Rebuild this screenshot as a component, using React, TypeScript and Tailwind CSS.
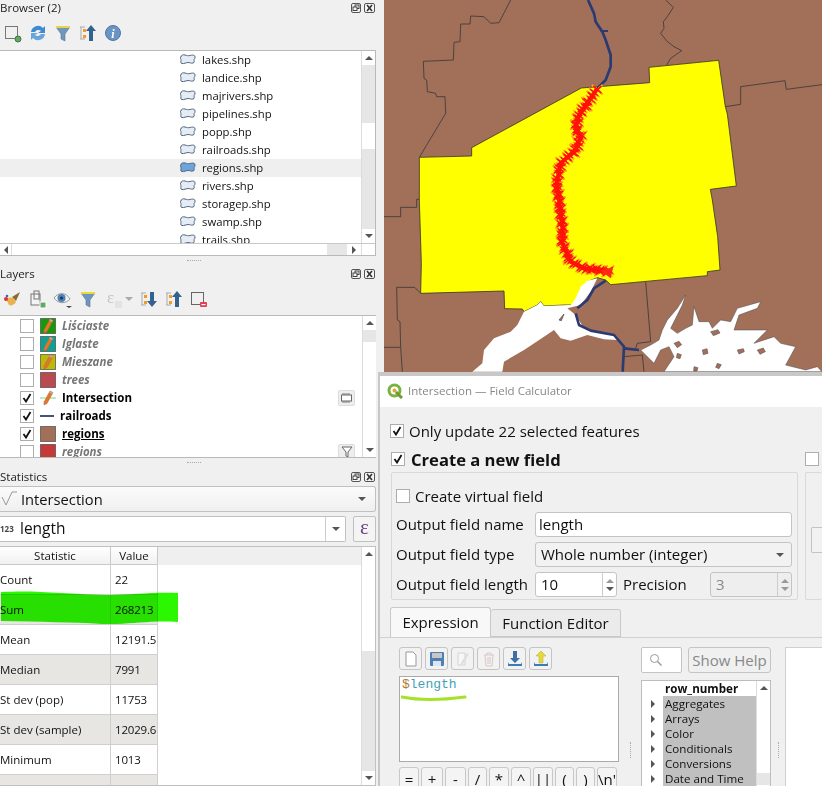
import React from "react";

const ui = { fontFamily: '"Open Sans", "Noto Sans", sans-serif' };

// ---------- small icons ----------
const Ico = ({ children, w = 20, h = 20 }: { children: React.ReactNode; w?: number; h?: number }) => (
  <svg width={w} height={h} viewBox={`0 0 ${w} ${h}`} className="shrink-0">
    {children}
  </svg>
);

const ShpIcon = ({ active }: { active?: boolean }) => (
  <svg width="16" height="12" viewBox="0 0 16 12" className="shrink-0">
    <path
      d="M1 3C1 1 3 .5 5 1s3 1 5 .5 5-1 5 1.500-1 2-1 3 1 2.500-1 3-3-.5-5-.5-4 1.500-6 1-1-2-1-3 0-1.500-1-3Z"
      fill={active ? "#6ea4dc" : "#e4ecf6"}
      stroke="#55657a"
      strokeWidth="1"
    />
  </svg>
);

const DockButtons = () => (
  <div className="flex gap-[3px] mr-[9px]">
    <svg width="10" height="10" viewBox="0 0 10 10">
      <rect x=".5" y=".5" width="9" height="9" rx="1.500" fill="#f5f5f5" stroke="#555" />
      <rect x="4" y="2" width="4" height="3.500" fill="none" stroke="#444" />
      <rect x="2" y="4" width="4" height="3.500" fill="#f5f5f5" stroke="#444" />
    </svg>
    <svg width="11" height="10" viewBox="0 0 11 10">
      <rect x=".5" y=".5" width="10" height="9" rx="1.500" fill="#f5f5f5" stroke="#555" />
      <path d="M3 2l5 6M8 2l-5 6" stroke="#333" strokeWidth="1.600" />
    </svg>
  </div>
);

const Funnel = ({ top = "#e8d44a" }: { top?: string }) => (
  <Ico>
    <path d="M3 4h14l-5 7v7l-4-2v-5Z" fill="#6f96bd" stroke="#5a7a9c" strokeWidth=".6" />
    <rect x="3" y="3" width="14" height="2" fill={top} />
  </Ico>
);

const ArrowTree = ({ down, color = "#34628f" }: { down?: boolean; color?: string }) => (
  <Ico>
    <path d="M2 4h5M3 4v12M2 16h5" stroke="#aaa" fill="none" />
    <rect x="5" y="6" width="3" height="3" fill="#f39a2c" />
    <rect x="5" y="12" width="3" height="3" fill="#f39a2c" />
    <path d={down ? "M11 3h4v9h3l-5 6-5-6h3Z" : "M13 2l5 6h-3v10h-4V8H8Z"} fill={color} />
  </Ico>
);

const RemoveBox = () => (
  <Ico>
    <rect x="2.500" y="3.500" width="12" height="12" fill="none" stroke="#666" />
    <rect x="11" y="13" width="7" height="5" rx="1" fill="#e2404c" />
    <rect x="12.500" y="15" width="4" height="1.200" fill="#fff" />
  </Ico>
);

const Brush = () => (
  <Ico>
    <path d="M9 8l8-5-4 9Z" fill="#8c6a2f" />
    <path d="M3 10c3-2 6-2 8 0l2 3c-2 3-5 4-7 3-1-2-2-4-3-6Z" fill="#e9b24a" />
    <circle cx="3" cy="10" r="2" fill="#d33" />
    <circle cx="4" cy="7" r="1.300" fill="#36c" />
  </Ico>
);

const Pencil = () => (
  <>
    <path d="M10 1l3 1.500-6 11-3 1.500v-3Z" fill="#e5752a" stroke="#b5643a" strokeWidth=".5" />
    <path d="M10 1l3 1.500-.8 1.500-3-1.500Z" fill="#b9b0a8" />
  </>
);

const Swatch = ({ bg, pencil }: { bg: string; pencil?: boolean }) => (
  <svg width="16" height="16" viewBox="0 0 16 16" className="shrink-0">
    <rect x=".5" y=".5" width="15" height="15" fill={bg} stroke="#4a4a4a" strokeOpacity=".7" />
    {pencil && <Pencil />}
  </svg>
);

const Check = ({ checked, className = "" }: { checked?: boolean; className?: string }) => (
  <span className={`w-[14px] h-[14px] shrink-0 border border-[#adadad] bg-white flex items-center justify-center ${className}`}>
    {checked && (
      <svg width="10" height="10" viewBox="0 0 10 10">
        <path d="M1.500 5l2.500 3.500L8.500 1" fill="none" stroke="#111" strokeWidth="1.800" />
      </svg>
    )}
  </span>
);

const Caret = ({ className = "" }: { className?: string }) => (
  <span className={`w-0 h-0 border-x-[4px] border-x-transparent border-t-[4px] border-t-[#555] ${className}`} />
);

// ---------- scrollbars ----------
const VScroll = ({ before, thumb }: { before: number; thumb: number }) => (
  <div className="w-[14px] shrink-0 flex flex-col bg-[#e6e6e6] border-l border-[#dcdcdc]">
    <div className="h-[14px] shrink-0 bg-white flex items-center justify-center">
      <span className="w-0 h-0 border-x-[4px] border-x-transparent border-b-[4px] border-b-[#555]" />
    </div>
    <div className="shrink-0" style={{ height: before }} />
    <div className="shrink-0 bg-white" style={{ height: thumb }} />
    <div className="flex-1" />
    <div className="h-[14px] shrink-0 bg-white flex items-center justify-center">
      <Caret />
    </div>
  </div>
);

const Handle = () => (
  <div className="h-[9px] flex justify-center items-center pl-[4px]">
    <div className="w-[14px] border-t border-dotted border-[#aaa]" />
  </div>
);

const DockTitle = ({ title, h }: { title: string; h: number }) => (
  <div className="flex items-center justify-between text-[11.5px] text-[#222]" style={{ height: h }}>
    <span>{title}</span>
    <DockButtons />
  </div>
);

// ---------- data ----------
const files = ["lakes", "landice", "majrivers", "pipelines", "popp", "railroads", "regions", "rivers", "storagep", "swamp", "trails"];

const stats = [
  ["Count", "22"],
  ["Sum", "268213"],
  ["Mean", "12191.5"],
  ["Median", "7991"],
  ["St dev (pop)", "11753"],
  ["St dev (sample)", "12029.6"],
  ["Minimum", "1013"],
  ["", ""],
];

const groups = ["Aggregates", "Arrays", "Color", "Conditionals", "Conversions", "Date and Time"];
const operators: [string, number][] = [
  ["=", 20], ["+", 22], ["-", 21], ["/", 19], ["*", 20], ["^", 20], ["||", 20], ["(", 19], [")", 19], ["\\n'", 20],
];

// ---------- map ----------
const redLine = [
  [640, 265], [610, 310], [585, 345], [575, 385], [590, 410], [575, 450], [530, 490], [518, 550],
  [525, 600], [535, 680], [535, 730], [560, 785], [600, 805], [680, 815],
];

function markers() {
  const pts: number[][] = [];
  for (let i = 0; i < redLine.length - 1; i++) {
    const [x1, y1] = redLine[i];
    const [x2, y2] = redLine[i + 1];
    const n = Math.ceil(Math.hypot(x2 - x1, y2 - y1) / 8);
    for (let k = 0; k < n; k++) {
      const j = pts.length;
      pts.push([
        x1 + ((x2 - x1) * k) / n + Math.sin(j * 1.7) * 4,
        y1 + ((y2 - y1) * k) / n + Math.cos(j * 2.3) * 4,
      ]);
    }
  }
  return pts;
}

const marks = markers();

const MapView = () => (
  <svg viewBox="0 0 1314 1125" className="w-full h-full block bg-[#a26f59]">
    <g fill="none" stroke="#3a3a3a" strokeWidth="2.500">
      <polyline points="380,0 345,68 320,70 300,50 260,48 258,72 230,72 228,125 210,127 208,180 118,184 120,235 128,240 130,275 155,280 158,290 183,290 185,340 106,472" />
      <polyline points="0,650 50,650 50,622 98,622 98,598 106,598" />
      <polyline points="110,880 92,862 38,862 40,960 48,965 50,1042 0,1042" />
      <polyline points="50,1042 55,1115" />
      <polyline points="785,845 800,1025 760,1030 755,1045" />
      <polyline points="720,1070 775,1065 780,1115" />
      <polyline points="845,0 868,22 850,50 838,65 840,85 830,100 850,125 870,140 893,152 860,175 848,195" />
      <polyline points="1024,320 1070,313 1070,260 1203,242 1207,268 1314,254" />
    </g>
    <polygon
      points="106,472 263,468 263,443 592,264 797,248 795,202 1004,181 1024,320 1030,342 1057,558 979,568 985,600 1001,710 1008,810 970,815 970,827 680,854 665,840 640,833 610,845 590,865 570,915 540,915 480,918 470,905 460,915 420,935 415,927 362,926 360,873 110,880 112,790 106,600"
      fill="#ffff00"
      stroke="#3a3a20"
      strokeWidth="2.500"
    />
    <path
      d="M640 835 610 842 590 860 572 900 560 915 480 918 470 905 460 915 420 935 400 975 380 995 330 1015 300 1050 295 1090 265 1115H355L360 1085 420 1050 480 1010 510 990 530 1015 560 1022 610 1005 660 1018 700 1020 720 1040 715 1030 690 1005 640 995 600 985 575 945 550 925 590 915 620 875Z"
      fill="#fff"
    />
    <path d="M525 960 540 942 532 962Z" fill="#a26f59" stroke="#444" strokeWidth="2" />
    <path
      d="M770 1050 800 1035 825 1020 835 990 850 960 880 925 905 885 895 915 880 945 860 985 880 1000 905 985 925 975 930 920 945 965 975 965 985 985 1010 960 1040 965 1060 925 1130 905 1120 925 1065 945 1050 990 1075 990 1150 990 1110 1030 1170 1010 1190 1030 1235 1040 1205 1095 1265 1110 1300 1100 1314 1115H840L870 1070 855 1040 830 1050 810 1090 785 1065Z"
      fill="#fff"
      stroke="#4a4a4a"
      strokeWidth="1.500"
    />
    <g fill="#a26f59" stroke="#444" strokeWidth="1.500">
      <path d="M870 1030l15-6 8 10-13 9Z" />
      <path d="M955 1050l14-4 3 14-14 4Z" />
      <path d="M1060 1050l18-4 3 9-16 7Z" />
      <path d="M880 1060l12 4-4 12-11-3Z" />
      <path d="M1000 1090l12 4-7 12-10-4Z" />
      <path d="M930 1100l12 3-3 10h-10Z" />
      <path d="M1120 1050l18-6 6 11-16 8Z" />
      <path d="M980 995l22-6 6 10-20 8Z" />
    </g>
    <g fill="none" stroke="#2c3a72" strokeWidth="8" strokeLinejoin="round">
      <polyline points="612,0 630,40 635,65 655,95 665,120 680,165 680,200 665,240 640,265" />
      <polyline points="650,93 672,93" strokeWidth="6" />
      <polyline points="665,842 630,865 610,900 580,925" />
      <polyline points="575,940 585,975 620,992 690,1005 720,1040 716,1115" />
      <polyline points="720,1045 765,1050" />
    </g>
    <g stroke="#ff9d1e" strokeWidth="5">
      {marks.map(([x, y], i) => (
        <path key={i} d={`M${x - 16} ${y - 14}L${x + 16} ${y + 14}M${x + 16} ${y - 14}L${x - 16} ${y + 14}`} />
      ))}
    </g>
    <g stroke="#ff1008" strokeWidth="4">
      {marks.map(([x, y], i) => (
        <path key={i} d={`M${x - 12} ${y - 10}L${x + 12} ${y + 10}M${x + 12} ${y - 10}L${x - 12} ${y + 10}`} />
      ))}
    </g>
    <polyline points={redLine.map((p) => p.join(",")).join(" ")} fill="none" stroke="#ff1008" strokeWidth="12" />
    <path d="M688 800 650 812 680 835Z" fill="#ff2a10" />
  </svg>
);

// ---------- left docks ----------
const BrowserDock = () => (
  <div className="flex flex-col">
    <DockTitle title="Browser (2)" h={16} />
    <div className="h-[34px] flex items-center gap-[5px] pl-[3px]">
      <Ico>
        <rect x="2.500" y="3.500" width="12" height="12" fill="none" stroke="#777" />
        <circle cx="15" cy="16" r="3" fill="#6ba26a" stroke="#3e7a3e" />
      </Ico>
      <Ico>
        <path d="M3 9a7 7 0 0 1 12-4l2-2v7h-7l3-2a4 4 0 0 0-6 1Z" fill="#3f8bd0" />
        <path d="M17 11a7 7 0 0 1-12 4l-2 2v-7h7l-3 2a4 4 0 0 0 6-1Z" fill="#67a5dd" />
      </Ico>
      <Funnel />
      <ArrowTree />
      <Ico>
        <circle cx="10" cy="10" r="7.500" fill="#6a94c4" stroke="#4d78a8" />
        <text x="10" y="14.500" textAnchor="middle" fontSize="12" fontWeight="700" fontStyle="italic" fill="#fff" fontFamily="Liberation Serif">i</text>
      </Ico>
    </div>
    <div className="h-[206px] mr-[8px] border border-l-0 border-[#b9b9b9] bg-white flex flex-col">
      <div className="flex h-[192px]">
        <div className="flex-1 overflow-hidden">
          {files.map((f) => (
            <div key={f} className={`h-[18px] flex items-center pl-[180px] gap-[6px] text-[11.3px] text-[#111] ${f === "regions" ? "bg-[#efefef]" : ""}`}>
              <ShpIcon active={f === "regions"} />
              <span>{f}.shp</span>
            </div>
          ))}
        </div>
        <VScroll before={58} thumb={26} />
      </div>
      <div className="h-[12px] flex border-t border-[#c8c8c8]">
        <div className="w-[11px] flex items-center justify-center">
          <span className="w-0 h-0 border-y-[4px] border-y-transparent border-r-[4px] border-r-[#555]" />
        </div>
        <div className="flex-1 bg-white border-l border-[#ddd]" />
        <div className="w-[20px] bg-[#e6e6e6]" />
        <div className="w-[14px] flex items-center justify-center">
          <span className="w-0 h-0 border-y-[4px] border-y-transparent border-l-[4px] border-l-[#555]" />
        </div>
        <div className="w-[14px] border-l border-[#ddd]" />
      </div>
    </div>
    <Handle />
  </div>
);

type Layer = { name: string; on?: boolean; swatch: React.ReactNode; cls: string; badge?: React.ReactNode };

const off = "italic font-bold text-[#777]";

const layers: Layer[] = [
  { name: "Liściaste", swatch: <Swatch bg="#159a0c" pencil />, cls: off },
  { name: "Iglaste", swatch: <Swatch bg="#0ca197" pencil />, cls: off },
  { name: "Mieszane", swatch: <Swatch bg="#bcb908" pencil />, cls: off },
  { name: "trees", swatch: <Swatch bg="#b84a50" />, cls: off },
  {
    name: "Intersection",
    on: true,
    cls: "font-bold text-black",
    swatch: (
      <svg width="16" height="16" viewBox="0 0 16 16" className="shrink-0">
        <path d="M0 8h16" stroke="#9fe8a8" strokeWidth="1.500" />
        <Pencil />
      </svg>
    ),
    badge: (
      <span className="absolute right-[7px] top-px w-[17px] h-[16px] rounded-[2px] bg-[#eee] border border-[#ddd] flex items-center justify-center">
        <svg width="13" height="10" viewBox="0 0 13 10">
          <rect x="1.500" y="2" width="10" height="6" fill="#fff" stroke="#666" />
          <path d="M3 0v2M5 0v2M7 0v2M9 0v2M3 8v2M5 8v2M7 8v2M9 8v2" stroke="#777" />
        </svg>
      </span>
    ),
  },
  {
    name: "railroads",
    on: true,
    cls: "font-bold text-black -ml-[2px]",
    swatch: (
      <svg width="16" height="16" viewBox="0 0 16 16" className="shrink-0">
        <path d="M0 8h14" stroke="#465082" strokeWidth="2" />
      </svg>
    ),
  },
  { name: "regions", on: true, swatch: <Swatch bg="#a26f59" />, cls: "font-bold text-black underline" },
  {
    name: "regions",
    swatch: <Swatch bg="#c43a3a" />,
    cls: off,
    badge: (
      <span className="absolute right-[7px] top-px w-[17px] h-[16px] rounded-[2px] bg-[#eee] border border-[#ddd] flex items-center justify-center">
        <svg width="12" height="12" viewBox="0 0 12 12">
          <path d="M1 1h10L7 6v5L5 10V6Z" fill="#fff" stroke="#666" />
        </svg>
      </span>
    ),
  },
];

const LayersDock = () => (
  <div className="flex flex-col">
    <DockTitle title="Layers" h={18} />
    <div className="h-[32px] flex items-center gap-[5px] pl-[3px]">
      <Brush />
      <Ico>
        <rect x="3" y="5" width="9" height="11" fill="#f3f3f3" stroke="#777" />
        <rect x="6" y="2" width="5" height="8" fill="none" stroke="#777" />
        <rect x="12" y="13" width="6" height="6" fill="#63a963" stroke="#fff" />
      </Ico>
      <Ico>
        <path d="M1 9c4-6 12-6 16 1-4 5-12 5-16-1Z" fill="#f2f2f2" stroke="#9a9a9a" />
        <circle cx="8.500" cy="9" r="4" fill="#4d82b8" />
        <circle cx="8.500" cy="9" r="1.500" fill="#1d3552" />
        <path d="M13 17h6l-3 2Z" fill="#444" />
      </Ico>
      <Funnel top="#ecd93a" />
      <div className="flex items-center gap-[3px] ml-[3px] mr-[1px]">
        <Ico w={16} h={20}>
          <text x="1" y="14" fontSize="17" fill="#c4c4c4" fontFamily="Liberation Serif">ε</text>
          <rect x="9" y="12" width="7" height="7" fill="#e3e3e3" />
        </Ico>
        <Caret className="border-t-[#aaa]" />
      </div>
      <ArrowTree down />
      <ArrowTree />
      <RemoveBox />
    </div>
    <div className="h-[143px] mr-[8px] border-y border-[#b9b9b9] bg-white flex overflow-hidden">
      <div className="flex-1 overflow-hidden pt-px">
        {layers.map((l, i) => (
          <div key={i} className="relative h-[18px] flex items-center pl-[20px] text-[11.5px]">
            <Check checked={l.on} className="w-[14px]" />
            <span className="ml-[6px] mr-[6px] flex">{l.swatch}</span>
            <span className={l.cls}>{l.name}</span>
            {l.badge}
          </div>
        ))}
      </div>
      <div className="flex [&>div>div:nth-child(2)]:bg-[#e6e6e6] [&>div]:bg-white">
        <VScroll before={12} thumb={0} />
      </div>
    </div>
    <Handle />
  </div>
);

const StatisticsDock = () => (
  <div className="relative flex flex-col">
    <DockTitle title="Statistics" h={19} />
    <div className="h-[26px] mr-[8px] border border-l-0 border-[#c0c0c0] rounded-r-[3px] bg-gradient-to-b from-[#fbfbfb] to-[#efefef] flex items-center pr-[9px] text-[14.7px] text-[#111]">
      <svg width="18" height="16" viewBox="0 0 18 16" className="ml-px mr-[2px] shrink-0">
        <path d="M1 6l4 8 6-13 5 0" fill="none" stroke="#999" />
      </svg>
      <span className="flex-1">Intersection</span>
      <Caret />
    </div>
    <div className="mt-[4px] h-[26px] mr-[8px] flex">
      <div className="w-[346px] border border-l-0 border-[#c0c0c0] rounded-r-[2px] bg-white flex items-center text-[15.5px] text-[#111]">
        <span className="w-[20px] text-[8px] font-bold text-[#444]">123</span>
        <span className="flex-1">length</span>
        <span className="w-[20px] self-stretch border-l border-[#ccc] flex items-center justify-center">
          <Caret />
        </span>
      </div>
      <div className="ml-[7px] flex-1 border border-[#c0c0c0] rounded-[2px] bg-[#f4f4f4] flex items-center justify-center text-[21px] leading-none pb-[3px] text-[#6a3d86]" style={{ fontFamily: "Liberation Serif" }}>
        ε
      </div>
    </div>
    <div className="mt-[4px] mr-[8px] h-[240px] border border-l-0 border-[#c0c0c0] bg-white flex overflow-hidden">
      <div className="flex-1 overflow-hidden text-[11.5px] text-[#111]">
        <div className="h-[18px] bg-[#efefef] flex leading-[17px]">
          <div className="w-[111px] text-center bg-gradient-to-b from-white to-[#f1f1f1] border-r border-b border-[#c9c9c9]">Statistic</div>
          <div className="w-[47px] text-center bg-gradient-to-b from-white to-[#f1f1f1] border-r border-b border-[#c9c9c9]">Value</div>
        </div>
        {stats.map(([name, value], i) => (
          <div key={i} className={`h-[30px] w-[158px] flex items-center border-b border-r border-[#cfcfcf] ${i % 2 === 1 ? "bg-[#e8e6e3]" : "bg-white"}`}>
            <div className="w-[111px] h-full flex items-center border-r border-[#cfcfcf]">{name}</div>
            <div className="pl-[4px] tracking-[-0.2px]">{value}</div>
          </div>
        ))}
      </div>
      <VScroll before={0} thumb={90} />
    </div>
    {/* green marker stroke over the Sum row */}
    <svg width="180" height="34" viewBox="0 0 180 34" className="absolute left-0 top-[123px] mix-blend-multiply">
      <path d="M1 2C40 0 60 4 111 5c20 0 40-3 67-2v29c-30-2-50 3-76 2-30-2-60-2-101-3Z" fill="#2bf800" />
    </svg>
  </div>
);

// ---------- dialog ----------
const Spin = ({ value, disabled, className = "" }: { value: string; disabled?: boolean; className?: string }) => (
  <div className={`h-[25px] border border-[#c4c4c4] rounded-[3px] flex items-center pl-[5px] ${disabled ? "bg-[#eeeeee] text-[#888]" : "bg-white"} ${className}`}>
    <span className="flex-1">{value}</span>
    <span className="w-[14px] self-stretch border-l border-[#ccc] flex flex-col items-center justify-center gap-[4px]">
      <span className="w-0 h-0 border-x-[4px] border-x-transparent border-b-[4px] border-b-[#999]" />
      <Caret className={disabled ? "border-t-[#999]" : ""} />
    </span>
  </div>
);

const FormRow = ({ label, children, className = "" }: { label: string; children: React.ReactNode; className?: string }) => (
  <div className={`flex items-center ${className}`}>
    <span className="w-[139px] shrink-0">{label}</span>
    {children}
  </div>
);

const ToolBtn = ({ children }: { children: React.ReactNode }) => (
  <span className="w-[23px] h-[23px] rounded-[3px] border border-[#c4c4c4] bg-[#f2f2f2] flex items-center justify-center">
    {children}
  </span>
);

const ExpressionTools = () => (
  <div className="flex gap-[3px]">
    <ToolBtn>
      <svg width="14" height="16" viewBox="0 0 14 16"><path d="M2 1h7l3 3v11H2Z" fill="#fff" stroke="#999" /></svg>
    </ToolBtn>
    <ToolBtn>
      <svg width="16" height="16" viewBox="0 0 16 16">
        <rect x="1" y="1" width="14" height="14" rx="1" fill="#4f7fb3" />
        <rect x="3" y="2" width="10" height="5" fill="#c7c7c7" />
        <rect x="4" y="10" width="8" height="5" fill="#dbe6f2" />
      </svg>
    </ToolBtn>
    <ToolBtn>
      <svg width="16" height="16" viewBox="0 0 16 16">
        <path d="M3 2h7v12H3Z" fill="#f6f6f6" stroke="#d4d4d4" />
        <path d="M12 2l2 1-6 10-2 1v-2Z" fill="#dedede" />
      </svg>
    </ToolBtn>
    <ToolBtn>
      <svg width="14" height="16" viewBox="0 0 14 16">
        <path d="M2 4h10M5 4V2h4v2M3 4l1 11h6l1-11M6 6v7M8 6v7" fill="none" stroke="#d8c8c8" />
      </svg>
    </ToolBtn>
    <ToolBtn>
      <svg width="18" height="18" viewBox="0 0 18 18">
        <path d="M7 1h4v7h3l-5 5-5-5h3Z" fill="#3d6ea5" />
        <path d="M2 12v4h14v-4l-1 2H3Z" fill="#3d7cb8" />
      </svg>
    </ToolBtn>
    <ToolBtn>
      <svg width="18" height="18" viewBox="0 0 18 18">
        <path d="M9 1l5 5h-3v7H7V6H4Z" fill="#e6d93a" stroke="#b9aa2a" strokeWidth=".5" />
        <path d="M2 12v4h14v-4l-1 2H3Z" fill="#3d7cb8" />
      </svg>
    </ToolBtn>
  </div>
);

const QLogo = () => (
  <svg width="16" height="16" viewBox="0 0 16 16" className="shrink-0">
    <circle cx="7.500" cy="7.500" r="5.500" fill="#fff" stroke="#7bb13e" strokeWidth="3" />
    <circle cx="7.500" cy="7.500" r="2" fill="#f0a030" />
    <path d="M9 9l6 6" stroke="#6a9c32" strokeWidth="3" />
  </svg>
);

const FieldCalculator = () => (
  <div className="absolute left-[378px] top-[372px] w-[444px] h-[414px] bg-[#f0f0f0] border-t-[4px] border-l-2 border-[#c8c8c8] text-[15px] text-[#111] overflow-hidden">
    <div className="h-[31px] bg-white flex items-center pl-[7px] pb-px gap-[5px] text-[11.5px] text-[#888]">
      <QLogo />
      <span>Intersection — Field Calculator</span>
    </div>

    <div className="mt-[14px] h-[20px] pl-[10px] flex items-center gap-[5px]">
      <Check checked />
      <span>Only update 22 selected features</span>
    </div>

    <div className="mt-[8px] h-[20px] pl-[11px] flex items-center">
      <div className="w-[414px] flex items-center gap-[6px]">
        <Check checked className="w-[13px] h-[13px]" />
        <span className="font-bold text-[16.6px] leading-none mt-[2px]">Create a new field</span>
      </div>
      <Check />
    </div>

    <div className="mt-[3px] pl-[11px] flex">
      <div className="w-[407px] h-[128px] border border-[#d9d9d9] rounded-[2px] px-[4px] flex flex-col">
        <div className="mt-[16px] h-[14px] flex items-center gap-[5px]">
          <Check className="w-[13px]" />
          <span>Create virtual field</span>
        </div>
        <FormRow label="Output field name" className="mt-[9px]">
          <div className="w-[257px] h-[25px] bg-white border border-[#c4c4c4] rounded-[3px] pl-[3px] flex items-center">length</div>
        </FormRow>
        <FormRow label="Output field type" className="mt-[5px]">
          <div className="w-[257px] h-[25px] bg-[#f2f2f2] border border-[#c4c4c4] rounded-[3px] pl-[5px] pr-[7px] flex items-center">
            <span className="flex-1">Whole number (integer)</span>
            <Caret />
          </div>
        </FormRow>
        <FormRow label="Output field length" className="mt-[5px]">
          <Spin value="10" className="w-[82px]" />
          <span className="ml-[6px] w-[87px]">Precision</span>
          <Spin value="3" disabled className="w-[82px]" />
        </FormRow>
      </div>
      <div className="ml-[7px] flex-1 border border-r-0 border-[#d9d9d9] rounded-[2px] pl-[5px] pt-[54px]">
        <div className="h-[26px] border border-r-0 border-[#c4c4c4] rounded-l-[2px] bg-[#f2f2f2]" />
      </div>
    </div>

    <div className="mt-[7px] pl-[10px] h-[30px] flex items-end">
      <div className="w-[101px] h-[30px] bg-[#f8f8f8] border border-b-0 border-[#c8c8c8] rounded-t-[3px] flex items-center justify-center">Expression</div>
      <div className="w-[130px] h-[28px] bg-[#ebebeb] border border-l-0 border-[#c8c8c8] rounded-t-[3px] flex items-center justify-center">Function Editor</div>
    </div>

    <div className="border-t border-[#d0d0d0] pt-[9px] pl-[19px] flex">
      <div className="w-[220px] shrink-0">
        <ExpressionTools />
        <div className="relative mt-[6px] h-[86px] bg-white border border-[#aaaaaa] pl-[2px] text-[13px] leading-[16px]" style={{ fontFamily: '"Liberation Mono", monospace' }}>
          <span className="text-[#b7792f]">$</span>
          <span className="text-[#3fa1b8]">length</span>
          <svg width="66" height="8" viewBox="0 0 66 8" className="absolute left-px top-[17px]">
            <path d="M1 3c15 3 40 3 63 0" fill="none" stroke="#a6e22a" strokeWidth="3" strokeLinecap="round" />
          </svg>
        </div>
        <div className="mt-[5px] flex gap-[2px]">
          {operators.map(([op, w]) => (
            <span key={op} className="h-[24px] bg-[#f4f4f4] border border-[#c8c8c8] rounded-[3px] flex items-center justify-center overflow-hidden" style={{ width: w }}>
              {op}
            </span>
          ))}
        </div>
      </div>

      <div className="w-[22px] shrink-0 flex justify-center pt-[95px]">
        <div className="h-[16px] border-l border-dotted border-[#aaa]" />
      </div>

      <div className="w-[130px] shrink-0">
        <div className="flex gap-[6px]">
          <div className="w-[41px] h-[26px] bg-white border border-[#c4c4c4] rounded-[2px] flex items-center pl-[7px]">
            <svg width="14" height="14" viewBox="0 0 14 14">
              <circle cx="5.500" cy="5.500" r="4" fill="none" stroke="#999" />
              <path d="M8.500 8.500l4 4" stroke="#999" strokeWidth="1.500" />
            </svg>
          </div>
          <div className="w-[83px] h-[26px] bg-[#f0f0f0] border border-[#c4c4c4] rounded-[3px] flex items-center justify-center text-[#888]">Show Help</div>
        </div>
        <div className="mt-[7px] h-[120px] bg-white border border-[#bdbdbd] flex text-[11.6px]">
          <div className="flex-1 overflow-hidden">
            <div className="h-[15px] pl-[23px] font-bold leading-[15px]">row_number</div>
            {groups.map((g) => (
              <div key={g} className="h-[15px] flex items-center">
                <span className="w-[21px] flex justify-center">
                  <span className="w-0 h-0 border-y-[4px] border-y-transparent border-l-[4px] border-l-[#555]" />
                </span>
                <span className="flex-1 h-full bg-[#c0c0c0] pl-[2px] leading-[15px]">{g}</span>
              </div>
            ))}
          </div>
          <VScroll before={0} thumb={78} />
        </div>
      </div>

      <div className="w-[14px] shrink-0 flex justify-center pt-[95px]">
        <div className="h-[16px] border-l border-dotted border-[#aaa]" />
      </div>

      <div className="flex-1 h-[160px] bg-white border border-r-0 border-[#d0d0d0]" />
    </div>
  </div>
);

export default function App() {
  return (
    <div className="relative w-[822px] h-[786px] overflow-hidden flex bg-[#f0f0f0]" style={ui}>
      <div className="w-[384px] shrink-0 flex flex-col">
        <BrowserDock />
        <LayersDock />
        <StatisticsDock />
      </div>
      <div className="flex-1 h-[375px]">
        <MapView />
      </div>
      <FieldCalculator />
    </div>
  );
}
